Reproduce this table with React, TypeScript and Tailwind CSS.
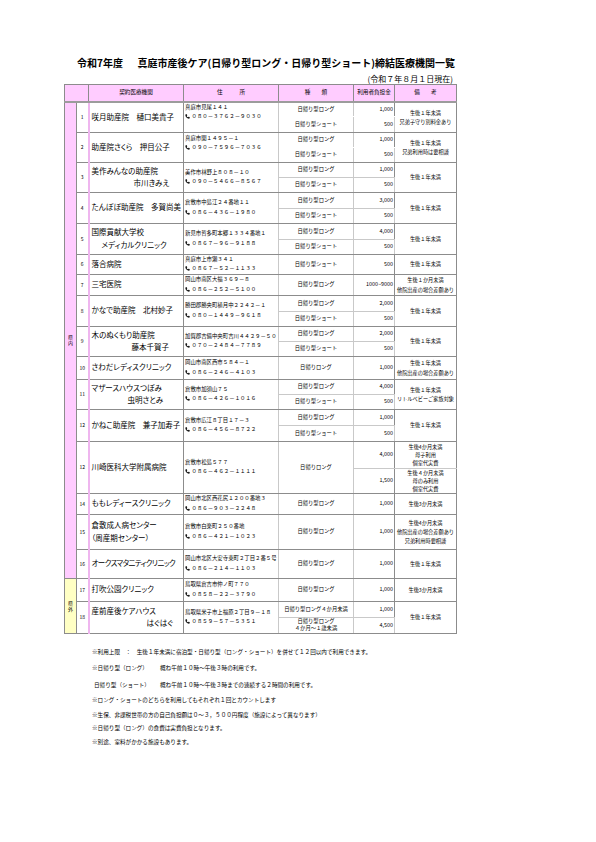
import React from "react";

type Line = string | { t: string; c: string };
type Sub = { type: React.ReactNode; fee: string };
type Entry = {
  no: string;
  name: Line[];
  addr: string;
  tel: string;
  subs: Sub[];
  notes: string[];
  h: string[];
  noDiv?: boolean;
  addrCls?: string;
  typeSpan?: boolean;
  subNotes?: string[][];
  nameExtra?: string;
};

const L = "日帰り型ロング";
const S = "日帰り型ショート";
const U1 = "生後１年未満";

const entries: Entry[] = [
  { no: "1", name: ["咲月助産院　樋口美貴子"], addr: "真庭市見尾１４１", tel: "０８０－３７６２－９０３０", subs: [{ type: L, fee: "1,000" }, { type: S, fee: "500" }], notes: [U1, "兄弟子守り別料金あり"], h: ["h-[15px]", "h-[15px]"], noDiv: true, addrCls: "pb-[10px]" },
  { no: "2", name: ["助産院さくら　押目公子"], addr: "真庭市関１４９５－１", tel: "０９０－７５９６－７０３６", subs: [{ type: L, fee: "1,000" }, { type: S, fee: "500" }], notes: [U1, "兄弟利用時は要相談"], h: ["h-[15px]", "h-[15px]"], noDiv: true, addrCls: "pb-[8px]" },
  { no: "3", name: ["美作みんなの助産院", { t: "市川きみえ", c: "pl-[42px]" }], addr: "美作市林野上８０８－１０", tel: "０９０－５４６６－８５６７", subs: [{ type: L, fee: "1,000" }, { type: S, fee: "500" }], notes: [U1], h: ["h-[15px]", "h-[15px]"] },
  { no: "4", name: ["たんぽぽ助産院　多賀尚美"], addr: "倉敷市中島江２４番地１１", tel: "０８６－４３６－１９８０", subs: [{ type: L, fee: "3,000" }, { type: S, fee: "500" }], notes: [U1], h: ["h-[16px]", "h-[15px]"] },
  { no: "5", name: ["国際貢献大学校", { t: "メディカルクリニック", c: "pl-[10px]" }], addr: "新見市哲多町本郷１３３４番地１", tel: "０８６７－９６－９１８８", subs: [{ type: L, fee: "4,000" }, { type: S, fee: "500" }], notes: [U1], h: ["h-[16px]", "h-[15px]"] },
  { no: "6", name: ["落合病院"], addr: "真庭市上市瀬３４１", tel: "０８６７－５２－１１３３", subs: [{ type: S, fee: "500" }], notes: [U1], h: ["h-[20px]"] },
  { no: "7", name: ["三宅医院"], addr: "岡山市南区大福３６９－８", tel: "０８６－２５２－５１００", subs: [{ type: L, fee: "1000~9000" }], notes: ["生後１か月未満", "他院出産の場合差額あり"], h: ["h-[21px]"] },
  { no: "8", name: ["かなで助産院　北村妙子"], addr: "勝田郡勝央町植月中２２４２－１", tel: "０８０－１４４９－９６１８", subs: [{ type: L, fee: "2,000" }, { type: S, fee: "500" }], notes: [U1], h: ["h-[16px]", "h-[15px]"] },
  { no: "9", name: ["木のぬくもり助産院", { t: "藤本千賀子", c: "pl-[40px]" }], addr: "加賀郡吉備中央町吉川４４２９－５０", tel: "０７０－２４８４－７７８９", subs: [{ type: L, fee: "2,000" }, { type: S, fee: "500" }], notes: [U1], h: ["h-[15px]", "h-[15px]"] },
  { no: "10", name: ["さわだレディスクリニック"], addr: "岡山市南区西市５８４－１", tel: "０８６－２４６－４１０３", subs: [{ type: "日帰りロング", fee: "1,000" }], notes: [U1, "他院出産の場合差額あり"], h: ["h-[23px]"] },
  { no: "11", name: ["マザースハウスつぼみ", { t: "虫明さとみ", c: "pl-[36px]" }], addr: "倉敷市加須山７５", tel: "０８６－４２６－１０１６", subs: [{ type: L, fee: "4,000" }, { type: S, fee: "500" }], notes: [U1, "リトルベビーご家族対象"], h: ["h-[15px]", "h-[15px]"] },
  { no: "12", name: ["かねこ助産院　兼子加寿子"], addr: "倉敷市広江８丁目１７－３", tel: "０８６－４５６－８７２２", subs: [{ type: L, fee: "1,000" }, { type: S, fee: "500" }], notes: [U1], h: ["h-[16px]", "h-[16px]"] },
  { no: "12", name: ["川崎医科大学附属病院"], addr: "倉敷市松島５７７", tel: "０８６－４６２－１１１１", subs: [{ type: "日帰りロング", fee: "4,000" }, { type: "", fee: "1,500" }], notes: [], typeSpan: true, subNotes: [["生後4か月未満", "母子利用", "個室代実費"], ["生後４か月未満", "母のみ利用", "個室代実費"]], h: ["h-[27px]", "h-[25px]"] },
  { no: "14", name: ["ももレディースクリニック"], addr: "岡山市北区西花尻１２００番地３", tel: "０８６－９０３－２２４８", subs: [{ type: L, fee: "1,000" }], notes: ["生後3か月未満"], h: ["h-[21px]"] },
  { no: "15", name: ["倉敷成人病センター", "（周産期センター）"], addr: "倉敷市白楽町２５０番地", tel: "０８６－４２１－１０２３", subs: [{ type: L, fee: "1,000" }], notes: ["生後4か月未満", "他院出産の場合差額あり", "兄弟利用時要相談"], h: ["h-[35px]"] },
  { no: "16", name: ["オークスマタニティクリニック"], addr: "岡山市北区大安寺東町２丁目２番５号", tel: "０８６－２１４－１１０３", subs: [{ type: L, fee: "1,000" }], notes: [U1], h: ["h-[29px]"], nameExtra: "tracking-[-0.6px]" },
  { no: "17", name: ["打吹公園クリニック"], addr: "鳥取県倉吉市仲ノ町７７０", tel: "０８５８－２２－３７９０", subs: [{ type: L, fee: "1,000" }], notes: ["生後3か月未満"], h: ["h-[23px]"] },
  {
    no: "18",
    name: ["産前産後ケアハウス", { t: "はぐはぐ", c: "pl-[55px]" }],
    addr: "鳥取県米子市上福原２丁目９－１８",
    tel: "０８５９－５７－５３５１",
    subs: [
      { type: "日帰り型ロング４か月未満", fee: "1,000" },
      { type: (<div className="leading-[7px]"><div>日帰り型ロング</div><div>４か月～１歳未満</div></div>), fee: "4,500" },
    ],
    notes: [U1],
    h: ["h-[16px]", "h-[16px]"],
  },
];

const td = "border border-solid border-[#c9c9c9] p-0 align-middle";
const DARKB = "border-b-[#8c8c8c]";

function Handset() {
  return (
    <svg width="5" height="5" viewBox="0 0 12 12" className="shrink-0">
      <path
        d="M2.5 0.8 L4.6 0.8 L5.4 3.6 L4 4.6 C4.7 6.3 5.8 7.4 7.4 8 L8.4 6.6 L11.2 7.4 L11.2 9.5 C11.2 10.6 10.4 11.2 9.4 11.2 C4.6 10.8 1.2 7.4 0.8 2.6 C0.8 1.6 1.4 0.8 2.5 0.8 Z"
        fill="#111"
      />
    </svg>
  );
}

function AreaCell({ label, span, yellow }: { label: string[]; span: number; yellow?: boolean }) {
  return (
    <td
      rowSpan={span}
      className={`${td} border-l-[#8c8c8c] border-r-[#8c8c8c] ${DARKB} ${yellow ? "bg-[#ffffc4]" : "bg-[#ffccff]"} text-[5px] leading-[6px] text-center`}
    >
      <div className="flex flex-col items-center">
        {label.map((c, i) => (
          <span key={i}>{c}</span>
        ))}
      </div>
    </td>
  );
}

function renderEntry(e: Entry, idx: number) {
  const n = e.subs.length;
  const out: React.ReactNode[] = [];
  for (let i = 0; i < n; i++) {
    const last = i === n - 1;
    const subB = last ? DARKB : e.noDiv ? "border-b-white" : "border-b-[#c9c9c9]";
    const s = e.subs[i];
    out.push(
      <tr key={`${idx}-${i}`} className={e.h[i]}>
        {i === 0 && idx === 0 && <AreaCell label={["県", "内"]} span={26} />}
        {i === 0 && idx === 16 && <AreaCell label={["県", "外"]} span={3} yellow />}
        {i === 0 && (
          <td rowSpan={n} className={`${td} ${DARKB} border-r-2 border-r-[#efb6ef] text-center text-[5px] leading-[6px]`}>
            {e.no}
          </td>
        )}
        {i === 0 && (
          <td
            rowSpan={n}
            className={`${td} ${DARKB} border-r-[#8c8c8c] text-left text-[7.5px] leading-[12.5px] pl-[2px] whitespace-nowrap [font-feature-settings:'palt'] ${e.nameExtra ?? ""}`}
          >
            {e.name.map((ln, k) =>
              typeof ln === "string" ? (
                <div key={k}>{ln}</div>
              ) : (
                <div key={k} className={ln.c}>
                  {ln.t}
                </div>
              )
            )}
          </td>
        )}
        {i === 0 && (
          <td rowSpan={n} className={`${td} ${DARKB} text-left text-[5.4px] leading-[9.5px] pl-[1px] whitespace-nowrap`}>
            <div className={e.addrCls ?? ""}>
              <div>{e.addr}</div>
              <div className="flex items-center gap-[1.5px]">
                <Handset />
                <span>{e.tel}</span>
              </div>
            </div>
          </td>
        )}
        {(!e.typeSpan || i === 0) && (
          <td
            rowSpan={e.typeSpan ? n : 1}
            className={`${td} ${e.typeSpan ? DARKB : subB} text-center text-[5.3px] leading-[7px] whitespace-nowrap`}
          >
            {s.type}
          </td>
        )}
        <td className={`${td} ${subB} border-r-[#8c8c8c] text-right text-[5.4px] leading-[7px] pr-[1px] whitespace-nowrap`}>
          {s.fee}
        </td>
        {e.subNotes ? (
          <td className={`${td} ${last ? DARKB : "border-b-[#c9c9c9]"} border-r-[#8c8c8c] text-center text-[5.2px] leading-[8px] whitespace-nowrap`}>
            {e.subNotes[i].map((t, k) => (
              <div key={k}>{t}</div>
            ))}
          </td>
        ) : (
          i === 0 && (
            <td rowSpan={n} className={`${td} ${DARKB} border-r-[#8c8c8c] text-center text-[5.2px] leading-[9.3px] whitespace-nowrap`}>
              {e.notes.map((t, k) => (
                <div key={k}>{t}</div>
              ))}
            </td>
          )
        )}
      </tr>
    );
  }
  return out;
}

const hd = `${td} border-t-[#8c8c8c] border-b-2 border-b-[#9c9c9c] bg-[#ffccff] text-center text-[5.6px] leading-[7px] whitespace-nowrap`;

export default function App() {
  return (
    <div className="w-[596px] h-[842px] bg-white text-black overflow-hidden font-['Noto_Sans_CJK_JP',sans-serif]">
      <div className="pt-[56px] pl-[77px] flex items-center h-[70px] text-[10px] leading-[14px] font-bold whitespace-nowrap">
        <span>令和7年度</span>
        <span className="ml-[14.5px]">真庭市産後ケア(日帰り型ロング・日帰り型ショート)締結医療機関一覧</span>
      </div>
      <div className="mt-[4px] ml-[64px] w-[392px] pr-[3px] text-right text-[8px] leading-[10px]">(令和７年８月１日現在)</div>
      <table className="ml-[64px] w-[392px] table-fixed border-collapse">
        <colgroup>
          <col className="w-[12px]" />
          <col className="w-[12px]" />
          <col className="w-[95px]" />
          <col className="w-[95px]" />
          <col className="w-[75px]" />
          <col className="w-[41px]" />
          <col className="w-[62px]" />
        </colgroup>
        <tbody>
          <tr className="h-[17px]">
            <td colSpan={2} className={`${hd} border-l-[#8c8c8c] border-r-[#8c8c8c]`}></td>
            <td className={`${hd} border-r-[#8c8c8c]`}>契約医療機関</td>
            <td className={`${hd} border-r-[#8c8c8c]`}>住　　　所</td>
            <td className={`${hd} border-r-[#8c8c8c]`}>種　　類</td>
            <td className={`${hd} border-r-[#8c8c8c]`}>利用者負担金</td>
            <td className={`${hd} border-r-[#8c8c8c]`}>備　　考</td>
          </tr>
          {entries.map((e, idx) => renderEntry(e, idx))}
        </tbody>
      </table>
      <div className="mt-[14px] ml-[92px] text-[5.6px] leading-[8px] whitespace-nowrap">
        <div className="h-[16px]">※利用上限　：　生後１年未満に宿泊型・日帰り型（ロング・ショート）を併せて１２回以内で利用できます。</div>
        <div className="h-[17px] flex">
          <span className="w-[68px]">※日帰り型（ロング）</span>
          <span>概ね午前１０時～午後３時の利用です。</span>
        </div>
        <div className="h-[15px] flex">
          <span className="w-[68px] pl-[2px]">日帰り型（ショート）</span>
          <span>概ね午前１０時～午後３時までの連続する２時間の利用です。</span>
        </div>
        <div className="h-[15px]">※ロング・ショートのどちらを利用してもそれぞれ１回とカウントします</div>
        <div className="h-[13px]">※生保、非課税世帯の方の自己負担額は０～３，５００円程度（施設によって異なります）</div>
        <div className="h-[14px]">※日帰り型（ロング）の食費は実費負担となります。</div>
        <div className="h-[8px]">※別途、室料がかかる施設もあります。</div>
      </div>
    </div>
  );
}
